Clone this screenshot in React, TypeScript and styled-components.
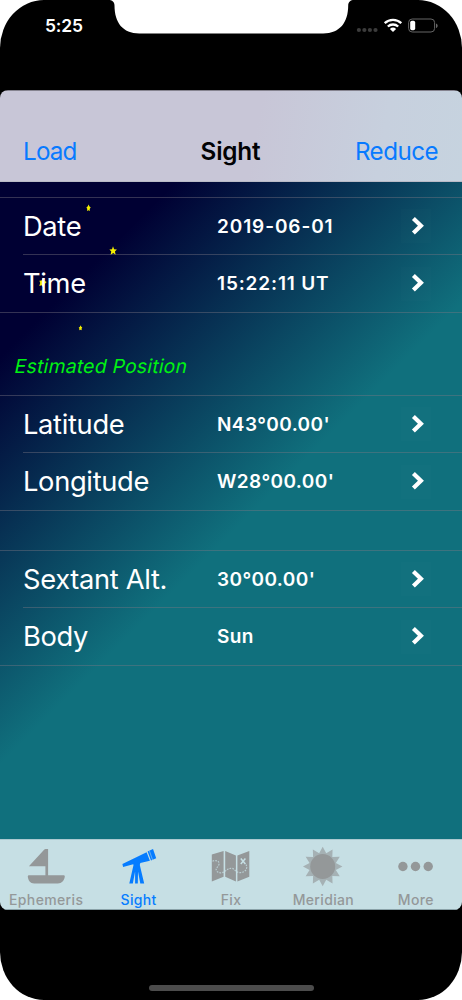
import React from "react";
import styled, { createGlobalStyle, css } from "styled-components";

const GlobalStyle = createGlobalStyle`
  html, body { margin: 0; padding: 0; background: #fff; }
  body { font-family: Inter, "Liberation Sans", sans-serif; -webkit-font-smoothing: antialiased; }
  * { box-sizing: border-box; }
`;

const Device = styled.div`
  position: relative;
  display: flex;
  flex-direction: column;
  width: 462px;
  height: 1000px;
  overflow: hidden;
  background: #000;
  border-radius: 44px / 48px;
`;

const Notch = styled.svg`
  position: absolute;
  top: 0;
  left: 108px;
`;

const StatusBar = styled.header`
  display: flex;
  justify-content: space-between;
  flex: 0 0 90px;
  padding: 16px 24px 0 45px;
`;

const Clock = styled.time`
  font-size: 17.5px;
  line-height: 20px;
  font-weight: 600;
  letter-spacing: -0.2px;
  color: #fff;
`;

const StatusIcons = styled.svg`
  display: block;
`;

const AppWindow = styled.div`
  display: flex;
  flex-direction: column;
  flex: 0 0 820px;
  border-radius: 8px;
  overflow: hidden;
`;

const NavBar = styled.nav`
  display: grid;
  grid-template-columns: 1fr auto 1fr;
  align-items: end;
  flex: 0 0 92px;
  padding: 0 24px 15px 23px;
  border-top: 1px solid #85838f;
  border-bottom: 1px solid #b9bac6;
  background: linear-gradient(100deg, #c8c6d7 0%, #c8c6d7 55%, #c7d0de 82%, #c6d3df 100%);
`;

const NavButton = styled.button<{ $end?: boolean }>`
  justify-self: ${(p) => (p.$end ? "end" : "start")};
  padding: 0;
  border: 0;
  background: none;
  font: 400 24.2px/28px Inter, sans-serif;
  letter-spacing: ${(p) => (p.$end ? "-0.55px" : "-0.8px")};
  color: #087aff;
`;

const Title = styled.h1`
  margin: 0;
  font-size: 24.3px;
  line-height: 29px;
  font-weight: 600;
  letter-spacing: -0.2px;
  color: #020204;
`;

const Main = styled.main`
  position: relative;
  flex: 1;
  padding-top: 15px;
  background: linear-gradient(135deg, #000033 124px, #10707d 412px);
`;

const Stars = styled.svg`
  position: absolute;
  top: 0;
  left: 0;
`;

const line = "rgba(125, 118, 130, 0.42)";

const Group = styled.section<{ $gap?: number }>`
  position: relative;
  margin-top: ${(p) => p.$gap ?? 0}px;
  border-top: 1px solid ${line};
  border-bottom: 1px solid ${line};
`;

const Row = styled.div`
  display: grid;
  grid-template-columns: 194px 1fr 30px;
  align-items: center;
  height: 56px;
  margin-left: 23px;
  padding-right: 31px;
  color: #fff;
  & + & {
    height: 58px;
    border-top: 1px solid ${line};
  }
`;

const Label = styled.span`
  font-size: 27.3px;
  line-height: 34px;
  letter-spacing: -0.33px;
  padding-top: 1px;
`;

const Value = styled.span<{ $tracking: number }>`
  font-size: 19px;
  line-height: 24px;
  font-weight: 600;
  letter-spacing: ${(p) => p.$tracking}px;
  padding-top: 1px;
`;

const ChevronBox = styled.span`
  display: flex;
  align-items: center;
  justify-content: center;
  height: 34px;
  padding: 0 0 1px 4px;
  background: rgba(255, 255, 255, 0.012);
`;

const SectionTitle = styled.h2`
  position: relative;
  margin: 40px 0 0;
  padding-left: 15px;
  height: 42px;
  font-size: 19.4px;
  line-height: 27px;
  font-weight: 400;
  letter-spacing: 0.22px;
  color: #00f212;
`;

const Slanted = styled.span`
  display: inline-block;
  transform: skewX(-12deg);
`;

const TabBar = styled.nav`
  display: grid;
  grid-template-columns: repeat(5, 1fr);
  flex: 0 0 71px;
  border-top: 1px solid #abc9d0;
  border-bottom: 1px solid #8aa2a8;
  background: #c6dfe4;
`;

const Tab = styled.a<{ $active?: boolean }>`
  display: flex;
  flex-direction: column;
  align-items: center;
  padding-top: 5px;
  color: #949899;
  font-size: 14px;
  line-height: 18px;
  font-weight: 500;
  letter-spacing: 0.35px;
  ${(p) =>
    p.$active &&
    css`
      color: #067cff;
    `}
  svg { margin-bottom: 6px; overflow: visible; }
`;

const HomeArea = styled.footer`
  display: flex;
  flex: 1;
  align-items: flex-end;
  justify-content: center;
  padding-bottom: 9px;
`;

const HomeIndicator = styled.div`
  width: 165px;
  height: 6px;
  border-radius: 3px;
  background: #4c4c4c;
`;

const Chevron = () => (
  <ChevronBox>
    <svg width="14" height="20" viewBox="0 0 14 20">
      <path d="M2.4 2.6 9.9 9.8 2.4 17" fill="none" stroke="#fff" strokeWidth="4.2" />
    </svg>
  </ChevronBox>
);

const Entry = ({ label, value, tracking = 0.4 }: { label: string; value: string; tracking?: number }) => (
  <Row>
    <Label>{label}</Label>
    <Value $tracking={tracking}>{value}</Value>
    <Chevron />
  </Row>
);

const Boat = () => (
  <svg width="40" height="40" viewBox="-1.2 0 40 40" fill="currentColor">
    <path d="M19.3 4h2.500v26.200h15.500c.8 0 1.300.6 1.200 1.400-.5 4-3 7-7 7H7.900c-4 0-6-3-6.400-7-.1-.8.4-1.400 1.200-1.400h16.400V21.200H2.600L17.800 4.700c.4-.4.9-.7 1.500-.7z" transform="translate(-.9 0)" />
  </svg>
);

const Telescope = () => (
  <svg width="40" height="40" viewBox="0 0 40 40" fill="currentColor">
    <path d="M3.400 19 27.600 7.200l3.300 8.500-9.600 2.300-.5 2 4.400 18.500h-3.900L19 26.500l-.2 12h-2.700v-12l-2.300 12h-3.500L14.500 20l-.3-.8-10.100 2.700z" />
    <path d="M28.600 6.500 34 4.100l3.200 9.100-5.200 2.200z" />
    <path d="m30.300 5.600 3.300 9.400" stroke="#c6dfe4" strokeWidth=".5" />
  </svg>
);

const MapIcon = () => (
  <svg width="40" height="40" viewBox="0 0 40 40" fill="currentColor">
    <path d="M.8 9.600 12.600 6v25.700L.8 36.500zM14.200 6l10.700 4.500v26l-10.700-4.800zM26.400 10.500 38.300 6v25.700l-11.900 4.800z" />
    <path d="M1.500 16.200c3-1.300 7-.5 6.500 3-.5 3-4 4-2.500 6.500s5 2.500 7 1.400c3-1.600 4.500-4 8-3.800s4 4.500 9 4.300c5-.3 8-4.400 5-9" fill="none" stroke="#c6dfe4" strokeOpacity=".75" strokeWidth="1.200" strokeDasharray="1.700 1.100" />
    <path d="m29.800 13.500 4.600 5.600m0-5.600-4.600 5.600" stroke="#c6dfe4" strokeWidth="1.500" />
  </svg>
);

const sunPoints = Array.from({ length: 24 }, (_, i) => {
  const radius = i % 2 ? 13.6 : 19.7;
  const angle = (i * Math.PI) / 12;
  return `${(19.7 + radius * Math.sin(angle)).toFixed(2)},${(21.5 - radius * Math.cos(angle)).toFixed(2)}`;
}).join(" ");

const SunIcon = () => (
  <svg width="40" height="40" viewBox="0 0 40 40" fill="currentColor">
    <polygon points={sunPoints} opacity=".65" />
    <circle cx="19.700" cy="21.500" r="12.500" />
  </svg>
);

const MoreIcon = () => (
  <svg width="40" height="40" viewBox="0 0 40 40" fill="currentColor">
    <circle cx="6.900" cy="21.500" r="4.700" />
    <circle cx="19.500" cy="21.500" r="4.700" />
    <circle cx="32.200" cy="21.500" r="4.700" />
  </svg>
);

const tabs = [
  { name: "Ephemeris", Icon: Boat },
  { name: "Sight", Icon: Telescope, active: true },
  { name: "Fix", Icon: MapIcon },
  { name: "Meridian", Icon: SunIcon },
  { name: "More", Icon: MoreIcon },
];

export default function App() {
  return (
    <>
      <GlobalStyle />
      <Device>
        <Notch width="246" height="34" viewBox="0 0 246 34">
          <path d="M0 0h246c-3.500 0-5.800 2-5.800 5.500 0 17-8.500 28-25 28H31.300c-16.500 0-24.800-11-24.800-28C6.500 2 4.500 0 0 0z" fill="#fff" />
        </Notch>
        <StatusBar>
          <Clock>5:25</Clock>
          <StatusIcons width="82" height="20" viewBox="0 0 82 20">
            <g fill="#3c3c3c">
              <circle cx="2.900" cy="14" r="2.100" />
              <circle cx="8.400" cy="14" r="2.100" />
              <circle cx="13.900" cy="14" r="2.100" />
              <circle cx="19.500" cy="14" r="2.100" />
            </g>
            <g fill="none" stroke="#fff" strokeWidth="2.300">
              <path d="M28.700 7.200a12.200 12.200 0 0 1 16.600 0" />
              <path d="M31.800 10.500a7.800 7.800 0 0 1 10.400 0" />
            </g>
            <path d="M33.900 12.900a4.600 4.600 0 0 1 6.200 0L37 16z" fill="#fff" />
            <rect x="52.600" y="3" width="26" height="13" rx="3.600" fill="none" stroke="#666" strokeWidth="1" />
            <rect x="54.200" y="4.800" width="5" height="9.400" rx="1.700" fill="#fff" />
            <path d="M80 7.400c2.200.8 2.200 3.800 0 4.600z" fill="#666" />
          </StatusIcons>
        </StatusBar>
        <AppWindow>
          <NavBar>
            <NavButton>Load</NavButton>
            <Title>Sight</Title>
            <NavButton $end>Reduce</NavButton>
          </NavBar>
          <Main>
            <Stars width="140" height="160" viewBox="0 182 140 160" fill="#f4ee00">
              <path d="m88.500 204.500 1 2 1.200.8-1 1.700.2 1.900-1.400-.6-1.600.6.400-2-.9-1.500 1.200-.8z" />
              <path d="m113 246.300 1.100 3 2.800.2-2 2 .8 3.200-2.500-1.700-2.700 1.900.8-3.300-1.900-2 2.600-.3z" />
              <path d="m43 277.500 1.200 3.200 2.500 1.200-2 2-1.200 4-1.800-2.600-2.400.8.900-3.200-.8-2.200 2.200-.3z" />
              <path d="m80.500 325.300.8 1.500 1 .7-.7 1.100.1 1.700-1.200-.5-1.300.4.200-1.500-.7-1.200 1.100-.6z" />
            </Stars>
            <Group>
              <Entry label="Date" value="2019-06-01" tracking={0.9} />
              <Entry label="Time" value="15:22:11 UT" tracking={0.85} />
            </Group>
            <SectionTitle>
              <Slanted>Estimated Position</Slanted>
            </SectionTitle>
            <Group>
              <Entry label="Latitude" value="N43°00.00'" />
              <Entry label="Longitude" value="W28°00.00'" />
            </Group>
            <Group $gap={39}>
              <Entry label="Sextant Alt." value="30°00.00'" />
              <Entry label="Body" value="Sun" />
            </Group>
          </Main>
          <TabBar>
            {tabs.map(({ name, Icon, active }) => (
              <Tab key={name} $active={active}>
                <Icon />
                {name}
              </Tab>
            ))}
          </TabBar>
        </AppWindow>
        <HomeArea>
          <HomeIndicator />
        </HomeArea>
      </Device>
    </>
  );
}
